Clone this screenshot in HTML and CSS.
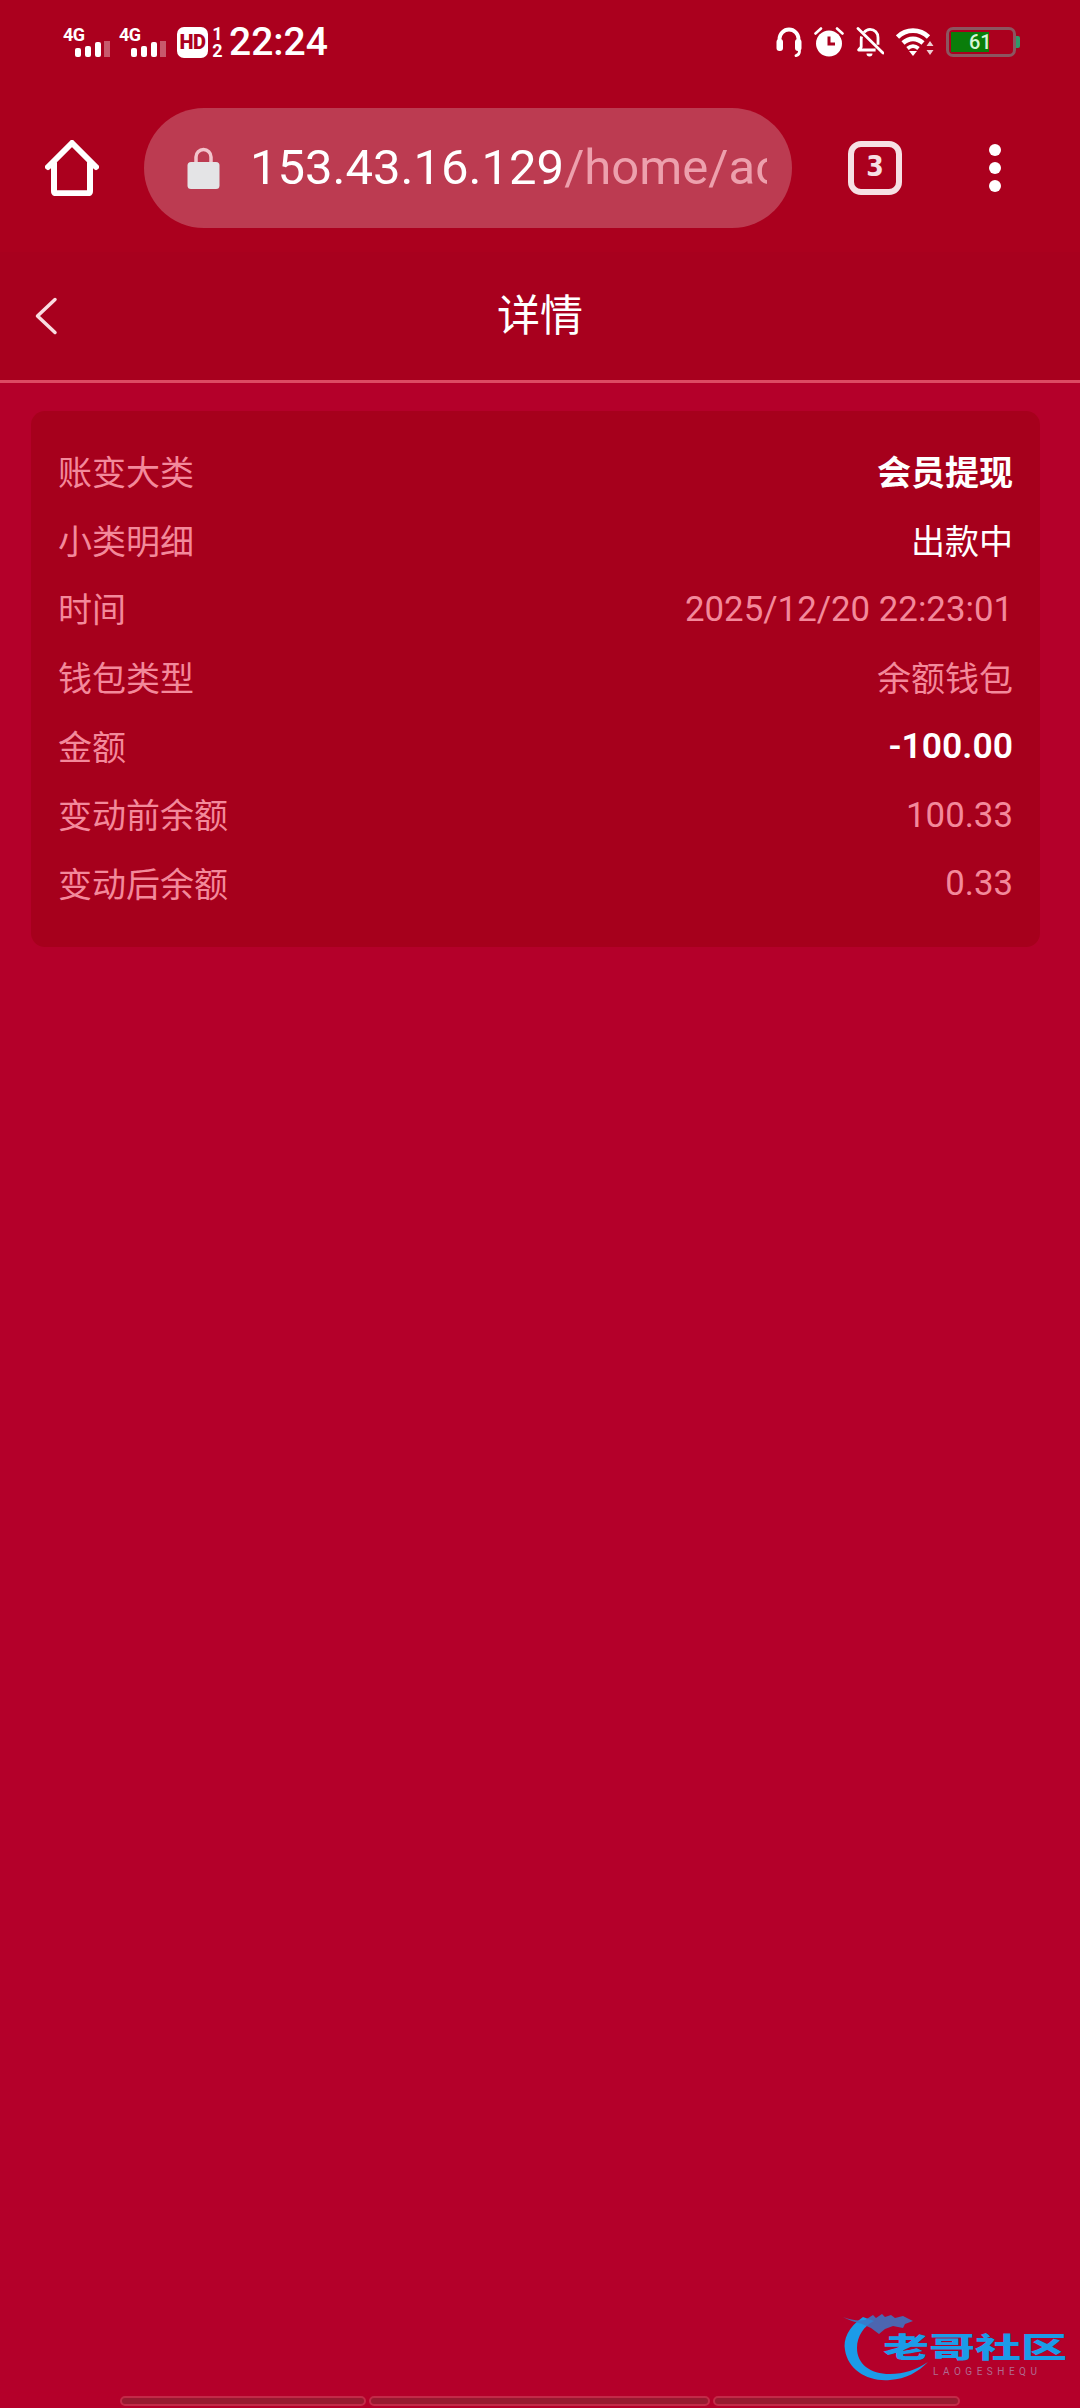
FILE: index.html
```html
<!DOCTYPE html>
<html lang="zh-CN">

<head>
    <meta charset="UTF-8">
    <meta name="viewport" content="width=device-width, initial-scale=1.0">
    <link rel="stylesheet" href="styles.css">
    <title>详情</title>
</head>

<body>
    <div class="page">
        <div class="status">
            <div class="status-left">
                <div class="sim">
                    <span class="sim-label">4G</span>
                    <svg class="sim-bars" width="35" height="16" viewBox="0 0 35 16">
                        <rect x="0" y="7" width="6" height="9" rx="2" fill="#fff"/>
                        <rect x="10" y="5" width="6" height="11" rx="2" fill="#fff"/>
                        <rect x="20" y="1" width="6" height="15" rx="2" fill="#fff"/>
                        <rect x="29" y="0" width="6" height="16" fill="#fff" opacity=".35"/>
                    </svg>
                </div>
                <div class="sim">
                    <span class="sim-label">4G</span>
                    <svg class="sim-bars" width="35" height="16" viewBox="0 0 35 16">
                        <rect x="0" y="7" width="6" height="9" rx="2" fill="#fff"/>
                        <rect x="10" y="5" width="6" height="11" rx="2" fill="#fff"/>
                        <rect x="20" y="1" width="6" height="15" rx="2" fill="#fff"/>
                        <rect x="29" y="0" width="6" height="16" fill="#fff" opacity=".35"/>
                    </svg>
                </div>
                <span class="hd">HD</span>
                <span class="hd-nums"><span>1</span><span>2</span></span>
                <span class="clock">22:24</span>
            </div>
            <div class="status-right">
                <svg class="headset" width="26" height="30" viewBox="0 0 26 30" fill="none">
                    <path d="M3.500 17V12a9.500 9.500 0 0 1 19 0v5" stroke="#fff" stroke-width="3.800"/>
                    <rect x="0.500" y="12" width="6.500" height="12" rx="3" fill="#fff"/>
                    <rect x="19" y="12" width="6.500" height="12" rx="3" fill="#fff"/>
                    <path d="M23.500 24c0 2.500-1 4-3.500 4.600" stroke="#fff" stroke-width="2.800" stroke-linecap="round"/>
                </svg>
                <svg class="alarm" width="30" height="30" viewBox="0 0 30 30" fill="none">
                    <circle cx="15" cy="16.500" r="13" fill="#fff"/>
                    <path d="M15 9.500V17h6" stroke="#aa001e" stroke-width="3"/>
                    <path d="M1.500 6.500 7 1.500M28.500 6.500 23 1.500" stroke="#fff" stroke-width="2.600" stroke-linecap="round"/>
                </svg>
                <svg class="bell" width="28" height="30" viewBox="0 0 28 30" fill="none">
                    <path d="M8 5.500C10 3 12 2.400 14 2.400c4.800 0 8 3.600 8 8v7.400M5.600 9.500c-.3 1-.4 2-.4 3V20L2.600 23h17" stroke="#fff" stroke-width="2.800" stroke-linejoin="round"/>
                    <path d="M2 1.500 27 26" stroke="#fff" stroke-width="2.800" stroke-linecap="round"/>
                    <path d="M10.500 26.500h6a3 3 0 0 1-6 0z" fill="#fff"/>
                </svg>
                <svg class="wifi" width="38" height="28" viewBox="0 0 38 28" fill="none">
                    <path d="M1.500 9C10 .5 24 .5 32.500 9" stroke="#fff" stroke-width="4.600"/>
                    <path d="M7 15c6-5.500 14-5.500 20 0" stroke="#fff" stroke-width="4.600"/>
                    <path d="M11.500 20.500c3.500-3 7.500-3 11 0" stroke="#fff" stroke-width="3.800"/>
                    <path d="M13 23h8l-4 5z" fill="#fff"/>
                    <path d="M34 13l3.500 5h-7zM34 27l-3.500-5h7z" fill="#fff" opacity=".8"/>
                </svg>
                <div class="battery">
                    <div class="battery-body">
                        <div class="battery-fill"></div>
                        <span class="battery-num">61</span>
                    </div>
                    <div class="battery-tip"></div>
                </div>
            </div>
        </div>

        <div class="toolbar">
            <svg class="home" width="54" height="56" viewBox="0 0 54 56" fill="none">
                <path d="M3 27 27 3l24 24M9 23v28c0 1.500.8 2.200 2.200 2.200h31.600c1.400 0 2.200-.7 2.200-2.200V23" stroke="#fff" stroke-width="6" stroke-linecap="round" stroke-linejoin="round"/>
            </svg>
            <div class="url-pill">
                <svg class="lock" width="33" height="42" viewBox="0 0 33 42" fill="none">
                    <path d="M9 18V10a7.500 7.500 0 0 1 15 0v8" stroke="#f2c4cc" stroke-width="3.500"/>
                    <rect x="0.500" y="15" width="32" height="27" rx="3.500" fill="#e4e4e6"/>
                </svg>
                <div class="url"><span class="url-host">153.43.16.129</span><span class="url-path">/home/account</span></div>
            </div>
            <div class="tabs">3</div>
            <div class="menu">
                <span class="dot"></span>
                <span class="dot"></span>
                <span class="dot"></span>
            </div>
        </div>

        <div class="header">
            <svg class="back" width="24" height="38" viewBox="0 0 24 38" fill="none">
                <path d="M21 2.500 3.500 19 21 35.500" stroke="#f9dce1" stroke-width="3.500" stroke-linecap="round" stroke-linejoin="round"/>
            </svg>
            <h1 class="title">详情</h1>
        </div>

        <div class="content">
            <div class="card">
                <div class="row"><span class="row-label">账变大类</span><span class="row-value strong">会员提现</span></div>
                <div class="row"><span class="row-label">小类明细</span><span class="row-value plain">出款中</span></div>
                <div class="row"><span class="row-label">时间</span><span class="row-value num">2025/12/20 22:23:01</span></div>
                <div class="row"><span class="row-label">钱包类型</span><span class="row-value">余额钱包</span></div>
                <div class="row"><span class="row-label">金额</span><span class="row-value strong num">-100.00</span></div>
                <div class="row"><span class="row-label">变动前余额</span><span class="row-value num">100.33</span></div>
                <div class="row"><span class="row-label">变动后余额</span><span class="row-value num">0.33</span></div>
            </div>
        </div>

        <div class="bottom-bars">
            <div class="seg seg-a"></div>
            <div class="seg seg-b"></div>
            <div class="seg seg-c"></div>
        </div>

        <div class="watermark">
            <svg class="wm-dragon" width="96" height="72" viewBox="0 0 96 72" fill="none">
                <path d="M23 5C8 15 3 28 5 38c3 20 23 32 45 30 16-1 28-8 38-18-12 8-24 12-38 12-20 0-33-10-33-26 0-12 7-22 17-27z" fill="#1c9be8"/>
                <path d="M3 5c8 3 15 4 22 3l8-5 3 3 6-4 3 3 6-2 4 3 8-2 10 5-8 3-2 4-10-2-8 3-6 5-8-6-9-4C15 10 8 8 3 5z" fill="#3a78c8" opacity=".85"/>
            </svg>
            <div class="wm-name">老哥社区</div>
            <div class="wm-sub">LAOGESHEQU</div>
        </div>
    </div>
</body>

</html>
```

FILE: styles.css
```css
body {
    margin: 0;
    background-color: #b4002a;
    font-family: Roboto, "Noto Sans CJK SC", sans-serif;
    color: #fff;
}

.page {
    position: relative;
    display: flex;
    flex-direction: column;
    width: 1080px;
    height: 2408px;
    overflow: hidden;
}

/* status bar */
.status {
    display: flex;
    justify-content: space-between;
    align-items: center;
    height: 84px;
    padding: 0 60px 0 63px;
    box-sizing: border-box;
    background-color: #ab001e;
}

.status-left,
.status-right {
    display: flex;
    align-items: center;
}

.sim {
    position: relative;
    width: 47px;
    height: 30px;
    margin-right: 9px;
}

.sim-label {
    display: block;
    font-size: 18px;
    font-weight: 700;
    line-height: 16px;
    letter-spacing: -0.5px;
}

.sim-bars {
    position: absolute;
    left: 12px;
    top: 14px;
}

.hd {
    width: 31px;
    height: 31px;
    margin-left: 2px;
    border-radius: 7px;
    background-color: #fff;
    color: #ab001e;
    font-size: 20px;
    font-weight: 900;
    line-height: 31px;
    text-align: center;
    letter-spacing: -0.5px;
}

.hd-nums {
    display: flex;
    flex-direction: column;
    justify-content: space-between;
    width: 13px;
    height: 32px;
    margin: 0 5px 0 3px;
    font-size: 18px;
    font-weight: 700;
    line-height: 15px;
    text-align: center;
}

.clock {
    font-size: 39px;
    font-weight: 500;
    line-height: 44px;
}

.status-right {
    gap: 12px;
}

.battery {
    display: flex;
    align-items: center;
}

.battery-body {
    position: relative;
    width: 70px;
    height: 30px;
    box-sizing: border-box;
    border: 3px solid #8c5560;
    border-radius: 7px;
    padding: 2px;
}

.battery-fill {
    width: 38px;
    height: 20px;
    background-color: #0a7d0a;
}

.battery-num {
    position: absolute;
    left: 20px;
    top: 0;
    font-size: 20px;
    font-weight: 500;
    line-height: 24px;
    color: #d6f5d6;
}

.battery-tip {
    width: 4px;
    height: 12px;
    border-radius: 0 2px 2px 0;
    background-color: #2f9a6a;
}

/* browser toolbar */
.toolbar {
    display: flex;
    align-items: center;
    height: 168px;
    padding-left: 45px;
    background-color: #ab001e;
}

.url-pill {
    display: flex;
    align-items: center;
    width: 648px;
    height: 120px;
    margin-left: 45px;
    padding: 0 25px 0 43px;
    box-sizing: border-box;
    border-radius: 60px;
    background-color: #bc3b51;
}

.lock {
    flex: none;
    margin-right: 30px;
}

.url {
    overflow: hidden;
    font-size: 49px;
    line-height: 60px;
    white-space: nowrap;
}

.url-path {
    color: #eda0ad;
}

.tabs {
    width: 54px;
    height: 54px;
    margin-left: 56px;
    box-sizing: border-box;
    border: 6px solid #f6e0e4;
    border-radius: 13px;
    color: #f6e0e4;
    font-family: "DejaVu Sans Condensed", "DejaVu Sans", sans-serif;
    font-size: 28px;
    font-weight: 700;
    line-height: 40px;
    text-align: center;
}

.menu {
    display: flex;
    flex-direction: column;
    gap: 6px;
    margin-left: 87px;
}

.dot {
    width: 12px;
    height: 12px;
    border-radius: 50%;
    background-color: #fff;
}

/* page header */
.header {
    position: relative;
    display: flex;
    justify-content: center;
    align-items: center;
    height: 131px;
    box-sizing: border-box;
    border-bottom: 3px solid #dc4a63;
    background-color: #a8001e;
}

.back {
    position: absolute;
    left: 34px;
    top: 45px;
}

.title {
    margin: 0;
    font-size: 43px;
    font-weight: 400;
    line-height: 60px;
}

/* detail card */
.content {
    padding: 28px 40px 0 31px;
}

.card {
    padding: 25px 27px 30px 27px;
    border-radius: 14px;
    background-color: #a6001c;
}

.row {
    display: flex;
    justify-content: space-between;
    align-items: center;
    height: 68.7px;
    font-size: 34px;
}

.row-label,
.row-value {
    color: #f3899b;
}

.row-value.num {
    padding-top: 2px;
    font-size: 34.8px;
}

.row-value.plain {
    color: #fff;
}

.row-value.strong {
    color: #fff;
    font-weight: 700;
}

.row-value.strong.num {
    font-size: 35.5px;
    font-weight: 600;
}

/* bottom strip */
.bottom-bars {
    display: flex;
    gap: 3px;
    margin-top: auto;
    padding: 0 120px 2px 120px;
}

.seg {
    height: 6px;
    box-sizing: content-box;
    border: 2px solid #c22a48;
    border-radius: 5px;
    background-color: #971a30;
}

.seg-a {
    width: 242px;
}

.seg-b {
    width: 337px;
}

.seg-c {
    width: 243px;
}

/* site watermark */
.watermark {
    position: absolute;
    left: 840px;
    top: 2312px;
    width: 232px;
    height: 90px;
}

.wm-dragon {
    position: absolute;
    left: 0;
    top: 0;
}

.wm-name {
    position: absolute;
    left: 43px;
    top: 22px;
    font-size: 46px;
    font-weight: 900;
    line-height: 46px;
    white-space: nowrap;
    color: #1c9be8;
    transform: scaleY(0.62);
    transform-origin: top left;
}

.wm-sub {
    position: absolute;
    left: 93px;
    top: 54px;
    font-size: 10px;
    line-height: 12px;
    letter-spacing: 4.5px;
    color: #b06a90;
}
```
